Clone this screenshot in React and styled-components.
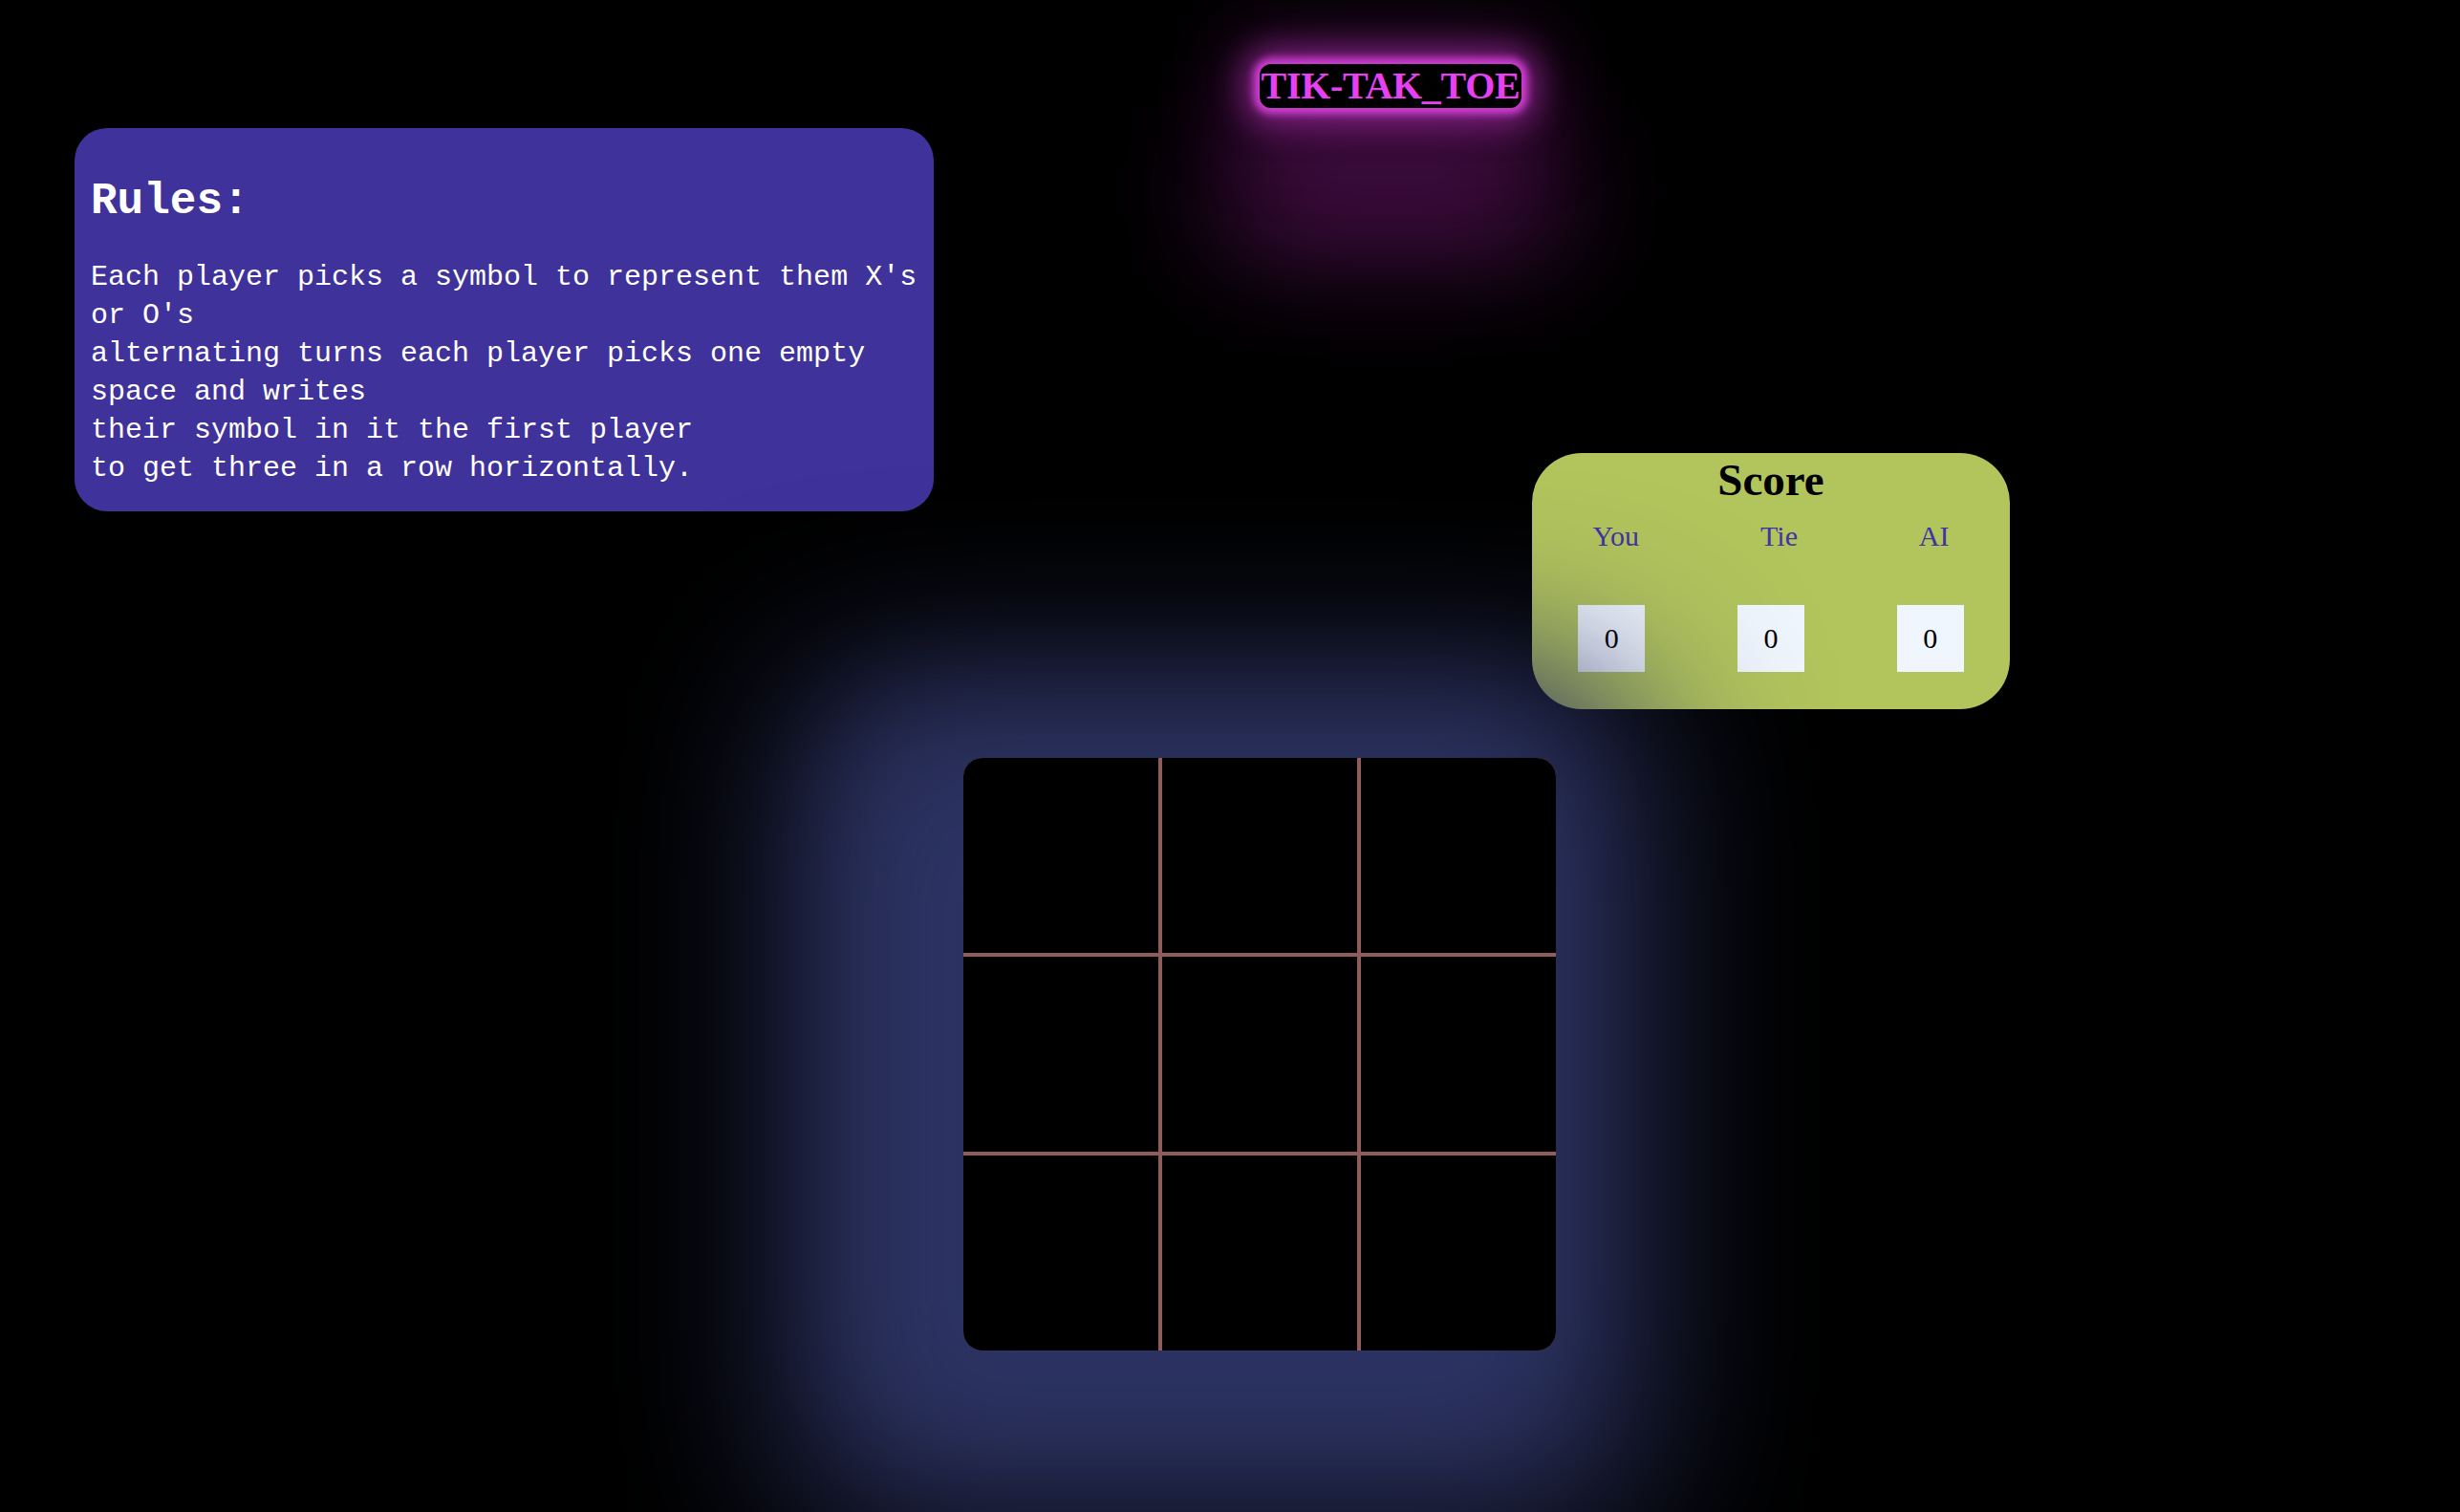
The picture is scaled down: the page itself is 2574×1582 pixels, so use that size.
import styled, { createGlobalStyle } from "styled-components"

const GlobalStyle = createGlobalStyle`
  html, body {
    margin: 0;
    padding: 0;
    background: #000;
  }
  body {
    font-family: "Liberation Serif", "Times New Roman", serif;
  }
`

const Page = styled.div`
  min-height: 1582px;
  background: #000;
  overflow: hidden;
`

const Header = styled.header`
  display: flex;
  padding: 67px 0 0 1318px;
`

const Title = styled.h1`
  margin: 0;
  padding: 0;
  width: 274px;
  height: 46px;
  text-align: center;
  white-space: nowrap;
  font-family: "Liberation Serif", "Times New Roman", serif;
  font-size: 40px;
  line-height: 46px;
  font-weight: 700;
  letter-spacing: -0.3px;
  color: #e640f2;
  background: #000;
  border-radius: 12px;
  box-shadow:
    0 0 8px 6px #d23fd6,
    0 0 34px 16px rgba(200, 55, 200, 0.55),
    0 0 80px 34px rgba(130, 30, 130, 0.35),
    0 110px 120px 40px rgba(105, 22, 105, 0.7);
`

const TopRow = styled.section`
  display: flex;
  align-items: flex-start;
  margin-top: 21px;
  padding-left: 78px;
`

const RulesCard = styled.div`
  width: 899px;
  box-sizing: border-box;
  padding: 0 12px 25px 17px;
  background: #3f329a;
  border-radius: 34px;
  color: #fff;
  font-family: "Liberation Mono", "Courier New", monospace;
`

const RulesHeading = styled.h2`
  margin: 51px 0 33px;
  font-size: 46px;
  font-weight: bold;
`

const RulesText = styled.p`
  margin: 0;
  font-size: 30px;
  line-height: 40px;
`

const ScoreCard = styled.div`
  width: 500px;
  box-sizing: border-box;
  margin: 340px 0 0 626px;
  padding: 1px 0 39px;
  background: #b2c45c;
  border-radius: 52px;
`

const ScoreHeading = styled.h2`
  margin: 0;
  text-align: center;
  font-size: 47px;
  font-weight: bold;
  color: #000;
`

const ScoreRow = styled.div`
  display: flex;
  justify-content: space-around;
  margin-top: ${(p) => p.$gap}px;
`

const Label = styled.span`
  font-size: 30px;
  color: #4034a4;
`

const ScoreBox = styled.div`
  width: 70px;
  height: 70px;
  display: flex;
  align-items: center;
  justify-content: center;
  background: #f0f6fd;
  font-size: 30px;
  color: #000;
`

const Board = styled.div`
  position: relative;
  margin: 51px 0 0 1008px;
  width: 620px;
  display: grid;
  grid-template-columns: repeat(3, 204px);
  grid-auto-rows: 204px;
  gap: 4px;
  background: #8f5b5b;
  border-radius: 20px;
  overflow: hidden;
  box-shadow:
    -45px 50px 190px 130px #2d3463,
    -60px 0 120px 60px rgba(45, 52, 99, 0.6);
`

const Cell = styled.div`
  background: #000;
`

export default function App() {
  const labels = ["You", "Tie", "AI"]
  const scores = [0, 0, 0]

  return (
    <>
      <GlobalStyle />
      <Page>
        <Header>
          <Title>TIK-TAK_TOE</Title>
        </Header>

        <TopRow>
          <RulesCard>
            <RulesHeading>Rules:</RulesHeading>
            <RulesText>
              Each player picks a symbol to represent them X's or O's
              <br />
              alternating turns each player picks one empty space and writes
              <br />
              their symbol in it the first player
              <br />
              to get three in a row horizontally.
            </RulesText>
          </RulesCard>

          <ScoreCard>
            <ScoreHeading>Score</ScoreHeading>
            <ScoreRow $gap={15}>
              {labels.map((l) => (
                <Label key={l}>{l}</Label>
              ))}
            </ScoreRow>
            <ScoreRow $gap={55}>
              {scores.map((s, i) => (
                <ScoreBox key={i}>{s}</ScoreBox>
              ))}
            </ScoreRow>
          </ScoreCard>
        </TopRow>

        <Board>
          {Array.from({ length: 9 }).map((_, i) => (
            <Cell key={i} />
          ))}
        </Board>
      </Page>
    </>
  )
}
